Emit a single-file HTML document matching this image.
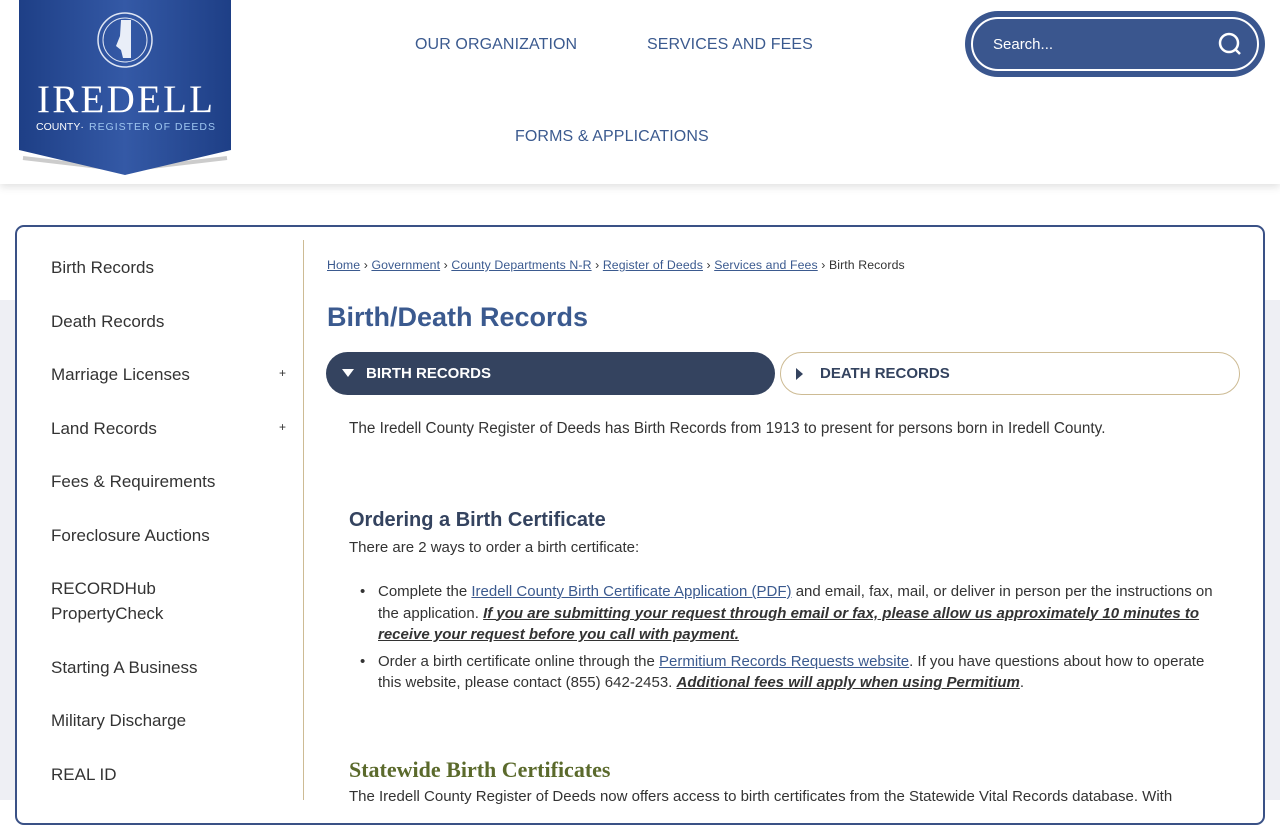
<!DOCTYPE html>
<html><head><meta charset="utf-8"><style>
*{box-sizing:border-box;margin:0;padding:0}
body{width:1280px;height:800px;overflow:hidden;background:#fff;font-family:"Liberation Sans",sans-serif;position:relative}
.gray{position:absolute;left:0;top:300px;width:1280px;height:500px;background:#eeeff4}
header{position:absolute;left:0;top:0;width:1280px;height:184px;background:#fff;box-shadow:0 3px 8px rgba(0,0,0,.12);z-index:2}
.logo{position:absolute;left:19px;top:0;width:212px;height:175px}
.nav{position:absolute;color:#3b5a8f;font-size:16px;letter-spacing:.1px}
.search{position:absolute;left:965px;top:11px;width:300px;height:66px;border-radius:33px;background:#3a568e;padding:6px}
.search div{width:100%;height:100%;border:2px solid #fff;border-radius:28px;color:#fff;font-size:15px;padding:17px 0 0 20px;position:relative}
.card{position:absolute;left:15px;top:225px;width:1250px;height:600px;background:#fff;border:2px solid #3a5186;border-radius:9px;z-index:1}
.side{position:absolute;left:34px;font-size:17px;color:#333;line-height:25px}
.plus{position:absolute;left:262px;font-size:12px;color:#333}
.div{position:absolute;left:303px;top:240px;width:1px;height:560px;background:#cdbb94;z-index:3}
.c{position:absolute;z-index:3;color:#333}
.bc{left:327px;top:258px;font-size:12.3px;color:#333;letter-spacing:.1px}
.bc a{color:#3b5a8f;text-decoration:underline}
h1{position:absolute;left:327px;top:302px;font-size:27px;color:#3b5a8f;font-weight:bold;z-index:3}
.tab1{position:absolute;left:326px;top:352px;width:449px;height:43px;border-radius:22px;background:#34435f;color:#fff;font-weight:bold;font-size:15px;padding:13px 0 0 40px;z-index:3}
.tab2{position:absolute;left:780px;top:352px;width:460px;height:43px;border-radius:22px;border:1px solid #cdbb94;color:#34435f;font-weight:bold;font-size:15px;padding:12px 0 0 39px;z-index:3}
.p{font-size:15px;color:#333}
a.l{color:#3b5a8f;text-decoration:underline}
.bi{font-weight:bold;font-style:italic;text-decoration:underline}
</style></head><body>
<div class="gray"></div>
<header>
<svg class="logo" viewBox="0 0 212 175">
<defs><linearGradient id="g" x1="0" x2="1"><stop offset="0" stop-color="#1e3f86"/><stop offset=".5" stop-color="#3459a6"/><stop offset="1" stop-color="#1e3f86"/></linearGradient></defs>
<path d="M4 158 L106 170 L208 158" fill="none" stroke="#ccc" stroke-width="4"/>
<path d="M0 0H212V150L106 175L0 150Z" fill="url(#g)"/>
<circle cx="106" cy="40" r="27" fill="none" stroke="#dfe6f4" stroke-width="1.5"/>
<circle cx="106" cy="40" r="22" fill="none" stroke="#dfe6f4" stroke-width="1"/>
<path d="M102 20h10v38h-8l-2-8-5-4 4-10z" fill="#e9eef8"/>
<text x="106" y="112" text-anchor="middle" font-family="Liberation Serif,serif" font-size="39" fill="#fff" textLength="176">IREDELL</text>
<text x="17" y="130" font-size="10.5" fill="#fff" font-family="Liberation Sans">COUNTY·</text>
<text x="70" y="130" font-size="10.5" fill="#9ec6f0" font-family="Liberation Sans" textLength="126">REGISTER OF DEEDS</text>
</svg>
<div class="nav" style="left:415px;top:36px">OUR ORGANIZATION</div>
<div class="nav" style="left:647px;top:36px">SERVICES AND FEES</div>
<div class="nav" style="left:515px;top:128px">FORMS &amp; APPLICATIONS</div>
<div class="search"><div>Search...<svg style="position:absolute;right:14px;top:12px" width="26" height="26" viewBox="0 0 26 26"><circle cx="12" cy="12" r="9" fill="none" stroke="#fff" stroke-width="2.5"/><path d="M18 18l5 5" stroke="#fff" stroke-width="2.5"/></svg></div></div>
</header>
<div class="card">
<div class="side" style="top:28px">Birth Records</div>
<div class="side" style="top:82px">Death Records</div>
<div class="side" style="top:135px">Marriage Licenses</div><div class="plus" style="top:139px">+</div>
<div class="side" style="top:189px">Land Records</div><div class="plus" style="top:193px">+</div>
<div class="side" style="top:242px">Fees &amp; Requirements</div>
<div class="side" style="top:296px">Foreclosure Auctions</div>
<div class="side" style="top:349px">RECORDHub<br>PropertyCheck</div>
<div class="side" style="top:428px">Starting A Business</div>
<div class="side" style="top:481px">Military Discharge</div>
<div class="side" style="top:535px">REAL ID</div>
</div>
<div class="div"></div>
<div class="c bc"><a>Home</a> › <a>Government</a> › <a>County Departments N-R</a> › <a>Register of Deeds</a> › <a>Services and Fees</a> › Birth Records</div>
<h1>Birth/Death Records</h1>
<div class="tab1"><svg style="position:absolute;left:16px;top:17px" width="12" height="8"><path d="M0 0h12L6 8z" fill="#fff"/></svg>BIRTH RECORDS</div>
<div class="tab2"><svg style="position:absolute;left:15px;top:15px" width="7" height="12"><path d="M0 0v12l7-6z" fill="#34435f"/></svg>DEATH RECORDS</div>
<div class="c p" style="left:349px;top:420px;font-size:15.3px">The Iredell County Register of Deeds has Birth Records from 1913 to present for persons born in Iredell County.</div>
<div class="c" style="left:349px;top:509px;font-size:20px;font-weight:bold;color:#34435f">Ordering a Birth Certificate</div>
<div class="c p" style="left:349px;top:539px">There are 2 ways to order a birth certificate:</div>
<div class="c p" style="left:360px;top:581px;width:860px;line-height:21.5px">
<div style="position:absolute;left:0;top:0">•</div>
<div style="padding-left:18px">Complete the <a class="l">Iredell County Birth Certificate Application (PDF)</a> and email, fax, mail, or deliver in person per the instructions on the application. <span class="bi">If you are submitting your request through email or fax, please allow us approximately 10 minutes to receive your request before you call with payment.</span></div>
<div style="position:absolute;left:0;top:70px">•</div>
<div style="padding-left:18px;margin-top:5px">Order a birth certificate online through the <a class="l">Permitium Records Requests website</a>. If you have questions about how to operate this website, please contact (855) 642-2453. <span class="bi">Additional fees will apply when using Permitium</span>.</div>
</div>
<div class="c" style="left:349px;top:757px;font-size:22px;font-weight:bold;color:#5b6a2c;font-family:'Liberation Serif',serif">Statewide Birth Certificates</div>
<div class="c p" style="left:349px;top:788px;white-space:nowrap">The Iredell County Register of Deeds now offers access to birth certificates from the Statewide Vital Records database. With</div>
</body></html>
